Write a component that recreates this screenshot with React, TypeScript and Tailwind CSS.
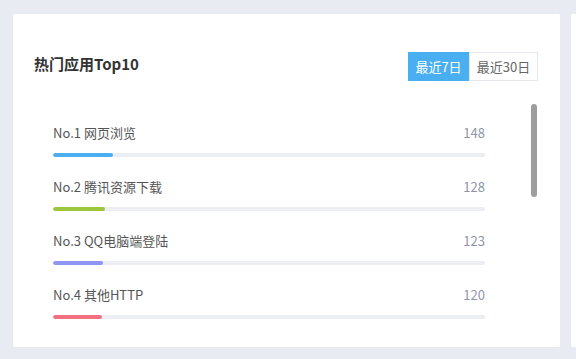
import React from "react";

const rows = [
  { label: "No.1 网页浏览", value: 148, color: "bg-[#4aaef0]", w: 60 },
  { label: "No.2 腾讯资源下载", value: 128, color: "bg-[#9dc63f]", w: 52 },
  { label: "No.3 QQ电脑端登陆", value: 123, color: "bg-[#8f95f3]", w: 50 },
  { label: "No.4 其他HTTP", value: 120, color: "bg-[#f2707f]", w: 49 },
];

export default function App() {
  return (
    <div
      className="w-[576px] h-[359px] bg-[#e8ebf2] flex pt-[14px] pl-[13px] gap-[11px] overflow-hidden"
      style={{ fontFamily: '"Noto Sans CJK SC", "Noto Sans", sans-serif' }}
    >
      <div className="w-[547px] h-[333px] shrink-0 bg-white rounded-[2px] flex flex-col pl-[20px] pr-[22px] pt-[38px]">
        <div className="flex items-center justify-between h-[29px]">
          <div className="text-[15px] font-bold text-[#333] mb-[6px] leading-none pl-[1px]">热门应用Top10</div>
          <div className="flex h-[29px] text-[13px]">
            <div className="w-[61px] bg-[#4aaff0] text-white flex items-center justify-center">最近7日</div>
            <div className="w-[69px] border border-[#e6e8ee] text-[#666] flex items-center justify-center">最近30日</div>
          </div>
        </div>
        <div className="relative flex-1 mt-[19px] overflow-hidden">
          <div className="absolute right-[1px] top-[4px] w-[6px] h-[93px] rounded-full bg-[#9e9e9e]" />
          <div className="flex flex-col pl-[20px] w-[452px] pt-[23px] gap-[20px]">
            {rows.map((r) => (
              <div key={r.label} className="flex flex-col">
                <div className="flex justify-between items-center h-[20px] text-[13px]">
                  <span className="text-[#555]">{r.label}</span>
                  <span className="text-[#8e96a8]">{r.value}</span>
                </div>
                <div className="mt-[10px] h-[4px] rounded-full bg-[#ebeef3] overflow-hidden">
                  <div className={`h-full rounded-full ${r.color}`} style={{ width: r.w }} />
                </div>
              </div>
            ))}
          </div>
        </div>
      </div>
      <div className="w-[20px] h-[333px] shrink-0 bg-white rounded-[2px]" />
    </div>
  );
}
